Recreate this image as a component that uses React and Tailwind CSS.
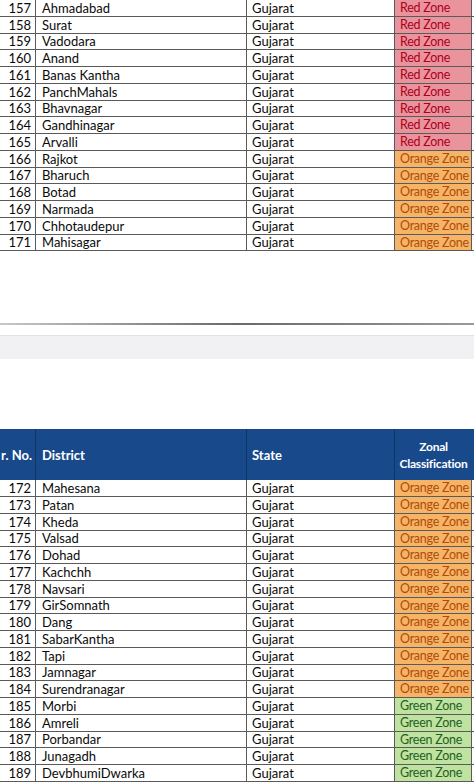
const topRows = [
  [157, "Ahmadabad", "red"],
  [158, "Surat", "red"],
  [159, "Vadodara", "red"],
  [160, "Anand", "red"],
  [161, "Banas Kantha", "red"],
  [162, "PanchMahals", "red"],
  [163, "Bhavnagar", "red"],
  [164, "Gandhinagar", "red"],
  [165, "Arvalli", "red"],
  [166, "Rajkot", "orange"],
  [167, "Bharuch", "orange"],
  [168, "Botad", "orange"],
  [169, "Narmada", "orange"],
  [170, "Chhotaudepur", "orange"],
  [171, "Mahisagar", "orange"],
];

const bottomRows = [
  [172, "Mahesana", "orange"],
  [173, "Patan", "orange"],
  [174, "Kheda", "orange"],
  [175, "Valsad", "orange"],
  [176, "Dohad", "orange"],
  [177, "Kachchh", "orange"],
  [178, "Navsari", "orange"],
  [179, "GirSomnath", "orange"],
  [180, "Dang", "orange"],
  [181, "SabarKantha", "orange"],
  [182, "Tapi", "orange"],
  [183, "Jamnagar", "orange"],
  [184, "Surendranagar", "orange"],
  [185, "Morbi", "green"],
  [186, "Amreli", "green"],
  [187, "Porbandar", "green"],
  [188, "Junagadh", "green"],
  [189, "DevbhumiDwarka", "green"],
];

const zones = {
  red: { label: "Red Zone", cls: "bg-[#e9939d] text-[#ad001c]" },
  orange: { label: "Orange Zone", cls: "bg-[#f6b468] text-[#b04c06]" },
  green: { label: "Green Zone", cls: "bg-[#bfe2a1] text-[#24601f]" },
};

const Row = ({ no, district, zone }) => {
  const z = zones[zone];
  return (
    <div className="flex h-[16.75px] border-b border-[#5a5a5a] text-[13px] leading-none">
      <div className="w-[36px] shrink-0 border-r border-[#5a5a5a] flex items-center justify-end pr-[4px] pt-[1px]">
        {no}
      </div>
      <div className="w-[211px] shrink-0 border-r border-[#5a5a5a] flex items-center pl-[6px] pt-[1px]">
        {district}
      </div>
      <div className="w-[148px] shrink-0 border-r border-[#5a5a5a] flex items-center pl-[5px] pt-[1px]">
        Gujarat
      </div>
      <div
        className={`w-[77px] shrink-0 border-r border-[#5a5a5a] flex items-center pl-[5px] pt-[1px] text-[12.5px] tracking-[-0.25px] whitespace-nowrap overflow-hidden ${z.cls}`}
      >
        {z.label}
      </div>
    </div>
  );
};

export default function App() {
  return (
    <div
      className="w-[474px] h-[782px] overflow-hidden bg-white text-[#0a0a0a]"
      style={{ fontFamily: "Lato, 'Open Sans', sans-serif" }}
    >
      <div>
        {topRows.map(([n, d, z]) => (
          <Row key={n} no={n} district={d} zone={z} />
        ))}
      </div>

      <div className="h-[72px]" />
      <div className="h-[2px] bg-gradient-to-r from-[#c8c8c8] via-[#6a6a6a] to-[#9a9a9a]" />
      <div className="h-[10px]" />
      <div className="h-[1px] bg-[#e2e2e4]" />
      <div className="h-[23px] bg-[#f1f1f3]" />
      <div className="h-[70px]" />

      <div className="flex h-[51px] bg-[#18498b] text-white font-bold text-[13px] leading-tight">
        <div className="w-[36px] shrink-0 border-r border-[#0f3566] flex items-center justify-end pr-[3px]">
          r. No.
        </div>
        <div className="w-[211px] shrink-0 border-r border-[#0f3566] flex items-center pl-[6px]">
          District
        </div>
        <div className="w-[148px] shrink-0 border-r border-[#0f3566] flex items-center pl-[5px]">
          State
        </div>
        <div className="w-[77px] shrink-0 flex flex-col items-center justify-center text-center text-[12px] leading-[17px] tracking-[-0.2px]">
          <span>Zonal</span>
          <span>Classification</span>
        </div>
      </div>
      <div>
        {bottomRows.map(([n, d, z]) => (
          <Row key={n} no={n} district={d} zone={z} />
        ))}
      </div>
    </div>
  );
}
